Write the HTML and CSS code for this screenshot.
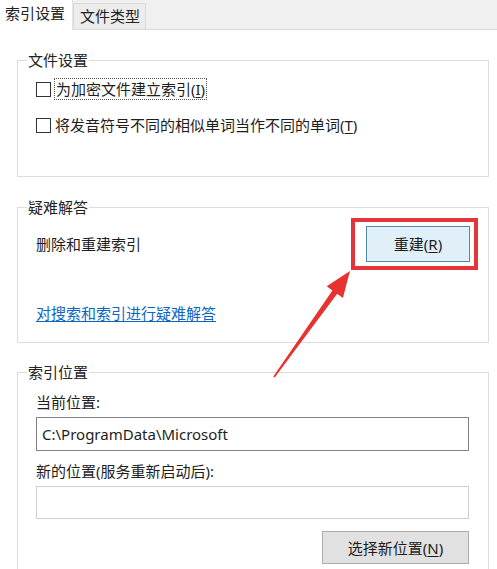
FILE: index.html
```html
<!DOCTYPE html>
<html lang="zh-CN">
<head>
  <meta charset="UTF-8">
  <title>索引选项</title>
  <link rel="stylesheet" href="styles.css">
</head>
<body>

<div class="dialog">

  <div class="tabs" role="tablist">
    <div class="tab active" role="tab" aria-selected="true">索引设置</div>
    <div class="tab" role="tab">文件类型</div>
  </div>

  <div class="page">

    <fieldset class="group group-files">
      <legend>文件设置</legend>
      <label class="check">
        <span class="box"></span>
        <span class="focus">为加密文件建立索引(<u>I</u>)</span>
      </label>
      <label class="check">
        <span class="box"></span>
        <span>将发音符号不同的相似单词当作不同的单词(<u>T</u>)</span>
      </label>
    </fieldset>

    <fieldset class="group group-trouble">
      <legend>疑难解答</legend>
      <div class="rebuild-row">
        <span>删除和重建索引</span>
        <span class="mark">
          <button class="btn btn-default">重建(<u>R</u>)</button>
        </span>
      </div>
      <a class="link" href="#">对搜索和索引进行疑难解答</a>
    </fieldset>

    <fieldset class="group group-location">
      <legend>索引位置</legend>
      <div class="field-label">当前位置:</div>
      <div class="field">C:\ProgramData\Microsoft</div>
      <div class="field-label second">新的位置(服务重新启动后):</div>
      <div class="field disabled"></div>
      <div class="actions">
        <button class="btn">选择新位置(<u>N</u>)</button>
      </div>
    </fieldset>

  </div>

  <!-- annotation arrow pointing at the rebuild button -->
  <svg class="arrow" width="497" height="569" viewBox="0 0 497 569" aria-hidden="true">
    <polygon points="350,271 342.9,297.9 337.2,293.8 274.7,377.5 273.3,376.5 332.4,290.4 326.7,286.3" fill="#e8322f"/>
  </svg>

</div>

</body>
</html>
```

FILE: styles.css
```css
:root {
  --line:      #dcdcdc;
  --text:      #1e1e1e;
  --tab-bg:    #f0f0f0;
  --link:      #0a66c2;
  --mark:      #e3353a;
}

* { box-sizing: border-box; }

html, body {
  margin: 0;
  background: #fff;
}

body {
  font-family: "Noto Sans", "Noto Sans CJK SC", sans-serif;
  font-size: 15px;
  line-height: 20px;
  color: var(--text);
  width: 497px;
  height: 569px;
  overflow: hidden;
}

.dialog { position: relative; }

u { text-decoration: underline; text-underline-offset: 2px; }

/* tabs */
.tabs {
  display: flex;
  align-items: flex-end;
  height: 30px;
  background: var(--tab-bg);
  border-bottom: 1px solid #d9d9d9;
}

.tab {
  height: 26px;
  padding: 0 5px 0 6px;
  line-height: 24px;
  background: #ececec;
  border: 1px solid #dadada;
  border-bottom: none;
  color: #222;
}

.tab.active {
  height: 30px;
  width: 73px;
  padding-left: 5px;
  line-height: 26px;
  background: #fff;
  border: none;
  border-right: 1px solid #e4e4e4;
  margin-bottom: -1px;
}

/* group boxes */
.page { padding: 20px 0 0 17px; }

.group {
  width: 472px;
  margin: 0;
  border: 1px solid var(--line);
  padding: 0 10px 0 18px;
}

.group legend {
  margin-left: -9px;
  padding: 0 1px;
  color: #222;
}

.group-files { padding-top: 9px; padding-bottom: 41px; }
.group-trouble { margin-top: 20px; padding-top: 1px; padding-bottom: 19px; }
.group-location { margin-top: 19px; padding-top: 10px; padding-right: 19px; height: 230px; }

/* checkboxes */
.check {
  display: flex;
  align-items: center;
  gap: 4px;
  height: 20px;
}

.check + .check { margin-top: 16px; }

.box {
  width: 15px;
  height: 15px;
  border: 1px solid #333;
  background: #fff;
  flex: none;
}

.focus {
  outline: 1px dotted #555;
  outline-offset: 0;
  padding: 0 1px;
}

/* troubleshooting */
.rebuild-row {
  display: flex;
  align-items: center;
  justify-content: space-between;
  height: 52px;
}

.mark {
  display: block;
  border: 4px solid var(--mark);
  padding: 4px 4px 4px 11px;
}

.link {
  display: inline-block;
  margin-top: 33px;
  color: var(--link);
  text-decoration: underline;
  text-underline-offset: 2px;
}

/* buttons */
.btn {
  display: block;
  font: inherit;
  color: var(--text);
  height: 36px;
  width: 104px;
  padding: 0;
  background: #e1e1e1;
  border: 1px solid #adadad;
}

.btn-default {
  background: #e1eff9;
  border: 1px solid #4a86b4;
  box-shadow: inset 0 0 0 1px #e5f1fb;
}

/* location fields */
.field-label.second { margin-top: 10px; }

.field {
  height: 34px;
  margin-top: 5px;
  padding: 6px 5px;
  border: 1px solid #828282;
  background: #fff;
}

.field.disabled {
  height: 33px;
  border-color: #d0d0d0;
}

.actions {
  display: flex;
  justify-content: flex-end;
  margin-top: 12px;
}

.actions .btn {
  width: 147px;
  height: 33px;
}

.arrow {
  position: absolute;
  left: 0;
  top: 0;
  pointer-events: none;
}
```
